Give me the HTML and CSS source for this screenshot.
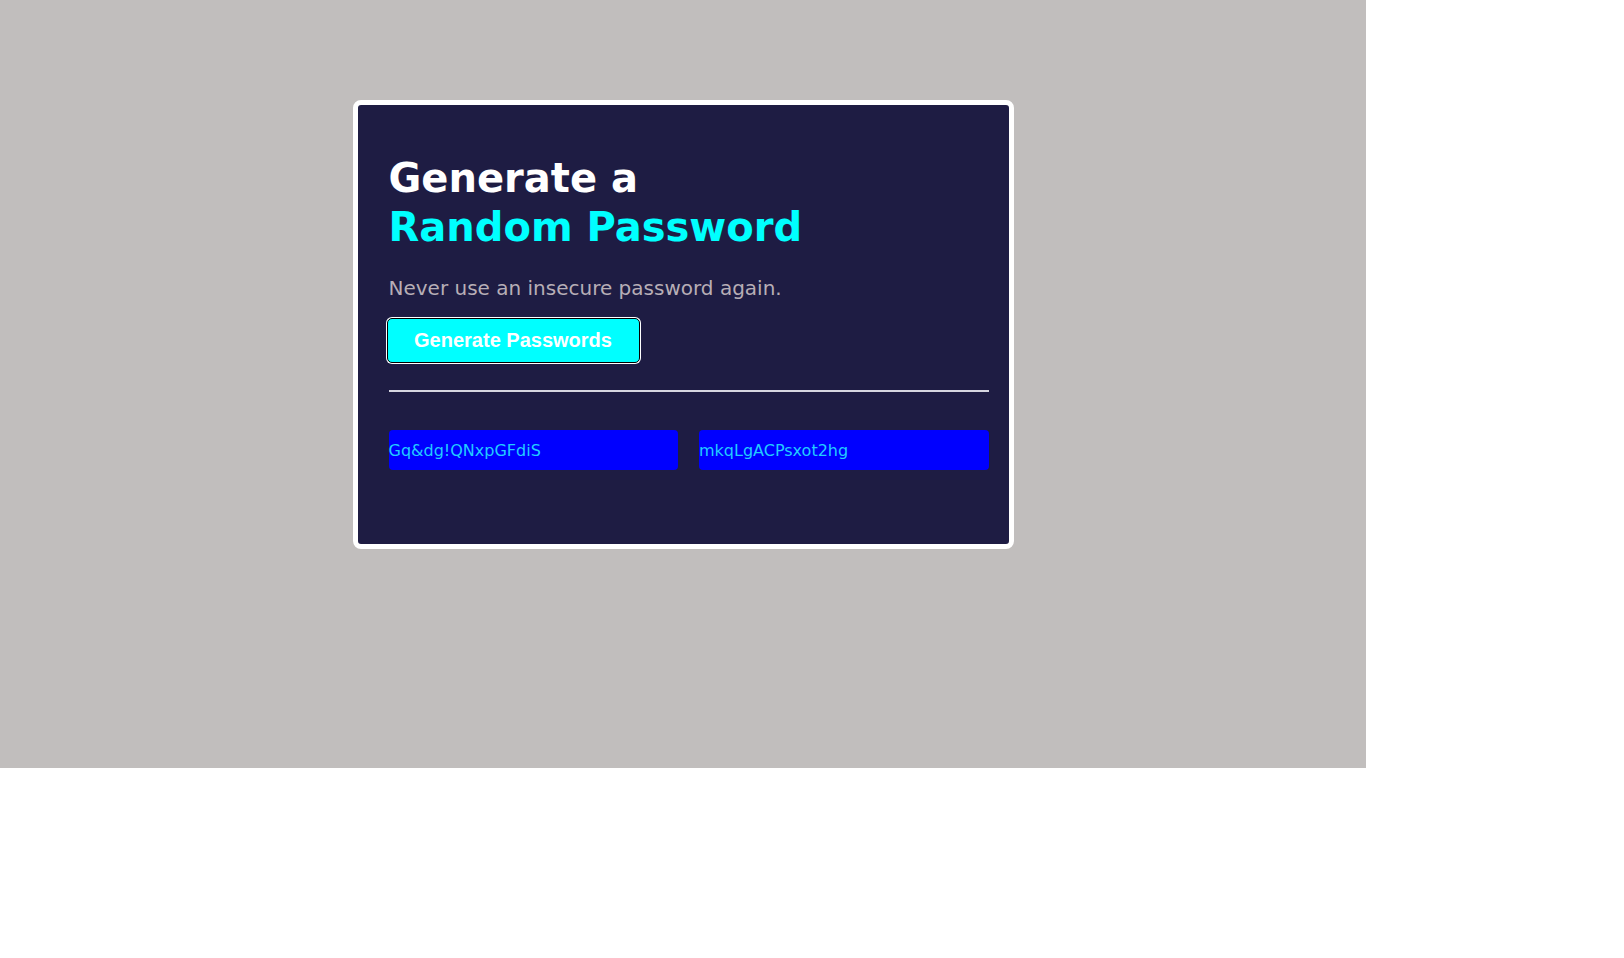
FILE: index.html
```html
<!DOCTYPE html>
<html>
<head>
<meta charset="utf-8">
<title>Password Generator</title>
<link rel="stylesheet" href="styles.css">
</head>
<body>
<div class="page">
  <div class="card">
    <h1 class="title">Generate a<br><span class="accent">Random Password</span></h1>
    <p class="subtitle">Never use an insecure password again.</p>
    <button class="gen-btn">Generate Passwords</button>
    <hr class="divider">
    <div class="results">
      <div class="pw">Gq&amp;dg!QNxpGFdiS</div>
      <div class="pw">mkqLgACPsxot2hg</div>
    </div>
  </div>
</div>
</body>
</html>
```

FILE: styles.css
```css
html, body {
  margin: 0;
  padding: 0;
  background: #ffffff;
}
.page {
  width: 1366px;
  height: 768px;
  background: #c1bebd;
  padding-top: 100px;
  box-sizing: border-box;
  display: flex;
  justify-content: center;
  align-items: flex-start;
}
.card {
  width: 661px;
  height: 449px;
  box-sizing: border-box;
  border: 5px solid #ffffff;
  border-radius: 8px;
  background: #1e1c43;
  padding: 49px 20px 0 31px;
  display: flex;
  flex-direction: column;
  align-items: flex-start;
  font-family: "DejaVu Sans", Verdana, sans-serif;
}
.title {
  margin: 0;
  font-size: 40px;
  line-height: 49px;
  font-weight: bold;
  color: #ffffff;
}
.accent {
  color: #00ffff;
}
.subtitle {
  margin: 24px 0 0 0;
  font-size: 20px;
  line-height: 24px;
  color: #b7aeb6;
}
.gen-btn {
  margin: 18px 0 0 -2px;
  width: 253px;
  height: 45px;
  box-sizing: border-box;
  background: #00ffff;
  border: 1px solid #000000;
  box-shadow: 0 0 0 1px #ffffff;
  border-radius: 5px;
  color: #ffffff;
  font-family: "Liberation Sans", Arial, sans-serif;
  font-weight: bold;
  font-size: 20px;
  padding: 0;
}
.divider {
  align-self: stretch;
  margin: 27px 0 0 0;
  border: 0;
  height: 2px;
  background: #d6d5e0;
}
.results {
  align-self: stretch;
  margin-top: 38px;
  display: flex;
  gap: 21px;
}
.pw {
  flex: 1;
  height: 40px;
  background: #0000ff;
  border-radius: 4px;
  color: #22ccff;
  font-family: "DejaVu Sans", Verdana, sans-serif;
  font-size: 16px;
  display: flex;
  align-items: center;
}
```
